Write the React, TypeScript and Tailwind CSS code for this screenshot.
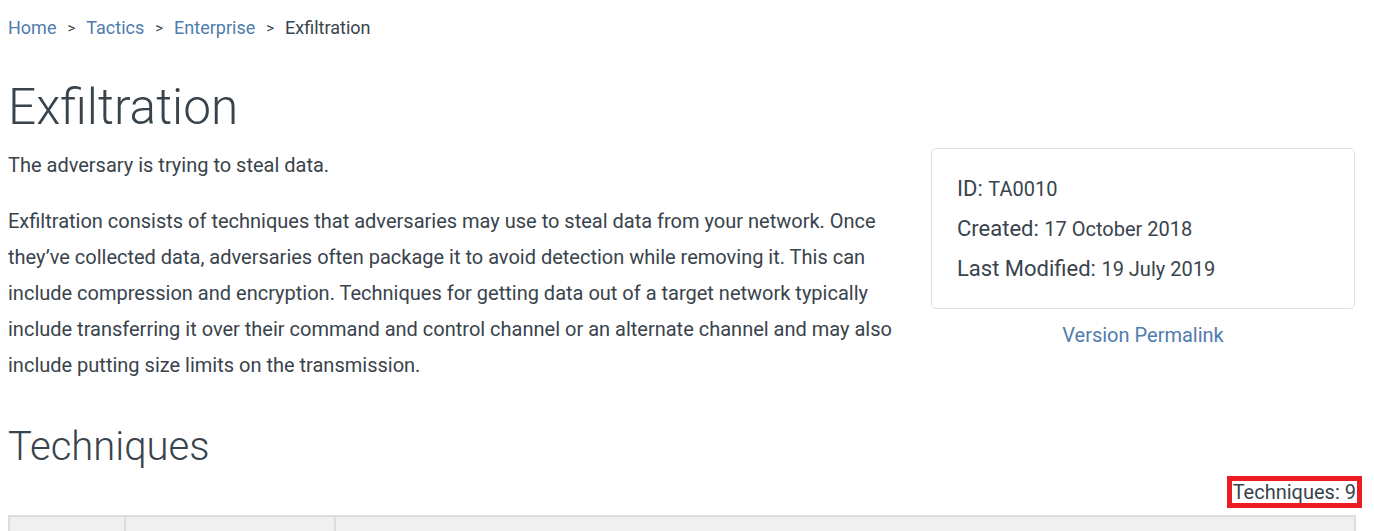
import React from "react";

export default function App() {
  const paragraph =
    "Exfiltration consists of techniques that adversaries may use to steal data from your network. Once they\u2019ve collected data, adversaries often package it to avoid detection while removing it. This can include compression and encryption. Techniques for getting data out of a target network typically include transferring it over their command and control channel or an alternate channel and may also include putting size limits on the transmission.";
  return (
    <div
      className="w-[1374px] h-[531px] overflow-hidden bg-white text-[#39434c]"
      style={{ fontFamily: "Roboto, 'Liberation Sans', sans-serif" }}
    >
      <div className="pl-[8px] pr-[12px]">
        <nav className="flex items-center gap-[11px] pt-[17px] text-[18px] leading-[22px]">
          <span className="text-[#4f7cac]">Home</span>
          <span className="text-[15px]">&gt;</span>
          <span className="text-[#4f7cac]">Tactics</span>
          <span className="text-[15px]">&gt;</span>
          <span className="text-[#4f7cac]">Enterprise</span>
          <span className="text-[15px]">&gt;</span>
          <span>Exfiltration</span>
        </nav>
        <h1 className="mt-[38px] text-[49.5px] leading-[60px] font-light">Exfiltration</h1>
        <div className="flex mt-[10px]">
          <div className="w-[900px] text-[20px]">
            <p className="leading-[36px]">The adversary is trying to steal data.</p>
            <p className="mt-[20px] leading-[36px] w-[895px]">{paragraph}</p>
          </div>
          <div className="ml-[23px] w-[424px] mt-[1px]">
            <div className="border border-[#e0e0e0] rounded-[5px] pl-[25px] pt-[20px] pb-[19px]">
              <div className="text-[22px] leading-[40px]">
                ID: <span className="text-[20px]">TA0010</span>
              </div>
              <div className="text-[22px] leading-[40px]">
                Created: <span className="text-[20px]">17 October 2018</span>
              </div>
              <div className="text-[22px] leading-[40px]">
                Last Modified: <span className="text-[20px]">19 July 2019</span>
              </div>
            </div>
            <div className="text-center text-[20px] leading-[24px] mt-[14px] text-[#4f7cac]">
              Version Permalink
            </div>
          </div>
        </div>
        <h2 className="mt-[40px] text-[40px] leading-[48px] font-light">Techniques</h2>
        <div className="flex justify-end mt-[5px]">
          <div className="border-[5px] border-[#ed1c24] px-[1px] text-[20px] leading-[22px]">
            Techniques: 9
          </div>
        </div>
        <div className="mt-[7px] w-[1348px] flex border-2 border-[#dddddd] bg-[#f0f0f0] h-[40px]">
          <div className="w-[116px] border-r-2 border-[#dddddd]"></div>
          <div className="w-[210px] border-r-2 border-[#dddddd]"></div>
          <div className="flex-1"></div>
        </div>
      </div>
    </div>
  );
}
